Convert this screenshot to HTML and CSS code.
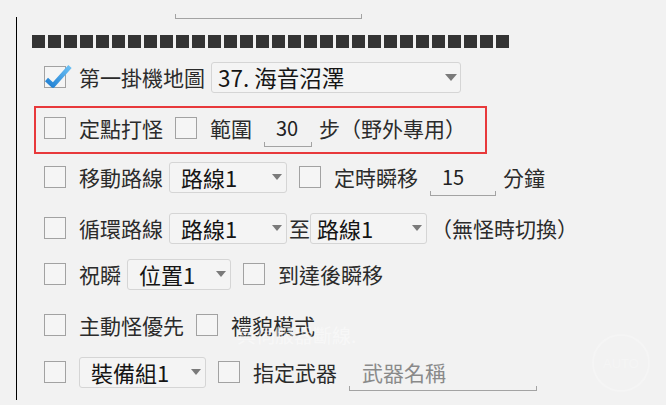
FILE: index.html
```html
<!DOCTYPE html>
<html lang="zh-Hant">
<head>
    <meta charset="UTF-8">
    <meta name="viewport" content="width=device-width, initial-scale=1.0">
    <title>掛機設定</title>
    <link rel="stylesheet" href="styles.css">
</head>
<body>
    <div class="top-field uline"></div>

    <div class="panel">
        <div class="tofu"></div>

        <div class="row r1">
            <span class="cb checked">
                <svg width="22" height="22" viewBox="0 0 22 22">
                    <defs>
                        <linearGradient id="chk" x1="0" y1="1" x2="1" y2="0">
                            <stop offset="0" stop-color="#1f7fd2"/>
                            <stop offset="1" stop-color="#6cc0f4"/>
                        </linearGradient>
                    </defs>
                    <path d="M2.5 13.5 L9 19.5 L26 0.5" fill="none" stroke="url(#chk)" stroke-width="4.5" stroke-linejoin="round"/>
                </svg>
            </span>
            <span class="label tight">第一掛機地圖</span>
            <div class="sel big w-map">37. 海音沼澤</div>
        </div>

        <div class="row boxed">
            <span class="cb"></span>
            <span class="label">定點打怪</span>
            <span class="cb"></span>
            <span class="label">範圍</span>
            <span class="num uline w-30">30</span>
            <span class="label">步（野外專用）</span>
        </div>

        <div class="row r3">
            <span class="cb"></span>
            <span class="label tight">移動路線</span>
            <div class="sel w-route">路線1</div>
            <span class="cb"></span>
            <span class="label">定時瞬移</span>
            <span class="num uline w-15">15</span>
            <span class="label">分鐘</span>
        </div>

        <div class="row r4">
            <span class="cb"></span>
            <span class="label tight">循環路線</span>
            <div class="sel w-route flush">路線1</div>
            <span class="label to">至</span>
            <div class="sel w-route2 near">路線1</div>
            <span class="label">（無怪時切換）</span>
        </div>

        <div class="row r5">
            <span class="cb"></span>
            <span class="label tight">祝瞬</span>
            <div class="sel w-pos">位置1</div>
            <span class="cb"></span>
            <span class="label">到達後瞬移</span>
        </div>

        <div class="row r6">
            <span class="cb"></span>
            <span class="label">主動怪優先</span>
            <span class="cb"></span>
            <span class="label">禮貌模式</span>
        </div>

        <div class="row r7">
            <span class="cb"></span>
            <div class="sel w-gear">裝備組1</div>
            <span class="cb"></span>
            <span class="label">指定武器</span>
            <span class="num uline w-weapon hint">武器名稱</span>
        </div>
    </div>

    <div class="toast">與伺服器斷線.</div>
    <div class="auto">AUTO</div>
</body>
</html>
```

FILE: styles.css
```css
* { margin: 0; padding: 0; box-sizing: border-box; }
body {
    font-family: "Noto Sans CJK TC", "Noto Sans", sans-serif;
    background-color: #f2f2f2;
    color: #2b2b2b;
    width: 666px;
    height: 405px;
    overflow: hidden;
    position: relative;
}

/* underline style inputs with little end ticks */
.uline {
    border-bottom: 1px solid #a3a3a3;
    background:
        linear-gradient(#a3a3a3, #a3a3a3) left bottom / 1px 4px no-repeat,
        linear-gradient(#a3a3a3, #a3a3a3) right bottom / 1px 4px no-repeat;
}
.top-field {
    height: 19px;
    width: 187px;
    margin-left: 175px;
}

.panel {
    margin: -2px 0 0 16px;
    height: 383px;
    border-left: 1.5px solid #000;
    padding: 18px 0 0 15px;
}
.tofu {
    width: 477px;
    height: 13px;
    background: repeating-linear-gradient(to right, #343434 0 13px, transparent 13px 16px);
}

.row {
    display: flex;
    align-items: center;
    height: 46px;
    padding-left: 12px;
    white-space: nowrap;
}
.r1 { margin-top: 6px; }
.boxed {
    margin: 6px 0 0 2px;
    width: 453px;
    height: 48px;
    border: 2px solid #e8393b;
    padding: 0 0 4px 8px;
}
.r3 { margin-top: 0; }
.r4 { margin-top: 5px; }
.r5 { margin-top: 0; }
.r6 { margin-top: 5px; }
.r7 { margin-top: 1px; }

.cb {
    flex: none;
    width: 22px;
    height: 22px;
    border: 1px solid #a2a2a2;
    background: #f5f5f5;
    margin-right: 13px;
}
.cb svg { display: block; overflow: visible; margin: -1px; }

.label {
    font-size: 21px;
    line-height: 1;
    color: #2b2b2b;
    margin-right: 12px;
}
.label.tight { margin-right: 6px; }
.label.to { margin: 0 0 0 2px; }

.sel {
    flex: none;
    display: flex;
    align-items: center;
    justify-content: space-between;
    height: 31px;
    padding: 0 4px 0 11px;
    border: 1px solid #d5d5d5;
    border-radius: 3px;
    background: #f4f4f4;
    font-size: 22px;
    line-height: 1;
    color: #151515;
    margin-right: 12px;
}
.sel::after {
    content: "";
    border-left: 5px solid transparent;
    border-right: 5px solid transparent;
    border-top: 6px solid #7a7a7a;
}
.sel.big { padding-left: 6px; font-size: 22.5px; }
.sel.big::after {
    border-left-width: 6.5px;
    border-right-width: 6.5px;
    border-top-width: 7px;
    margin-right: -1px;
}
.sel.flush { margin-right: 0; }
.sel.near { margin-right: 4px; padding-left: 6px; }

.w-map { width: 250px; }
.w-route { width: 118px; }
.w-route2 { width: 117px; }
.w-pos { width: 104px; }
.w-gear { width: 127px; }

.num {
    flex: none;
    height: 38px;
    display: flex;
    align-items: center;
    padding-left: 12px;
    font-size: 20px;
    color: #222;
    margin-right: 7px;
}
.w-30 { width: 48px; }
.w-15 { width: 66px; }
.w-weapon { width: 188px; padding-left: 13px; font-size: 21px; }
.hint { color: #8a8a8a; }

/* faded overlays from the game screen */
.toast {
    position: absolute;
    left: 237px;
    top: 321px;
    font-size: 19px;
    color: rgba(255, 255, 255, 0.45);
}
.auto {
    position: absolute;
    left: 592px;
    top: 334px;
    width: 58px;
    height: 58px;
    border-radius: 50%;
    border: 2px solid rgba(255, 255, 255, 0.22);
    display: flex;
    align-items: center;
    justify-content: center;
    font-family: "Liberation Sans", sans-serif;
    font-size: 13px;
    color: rgba(255, 255, 255, 0.25);
}
```
